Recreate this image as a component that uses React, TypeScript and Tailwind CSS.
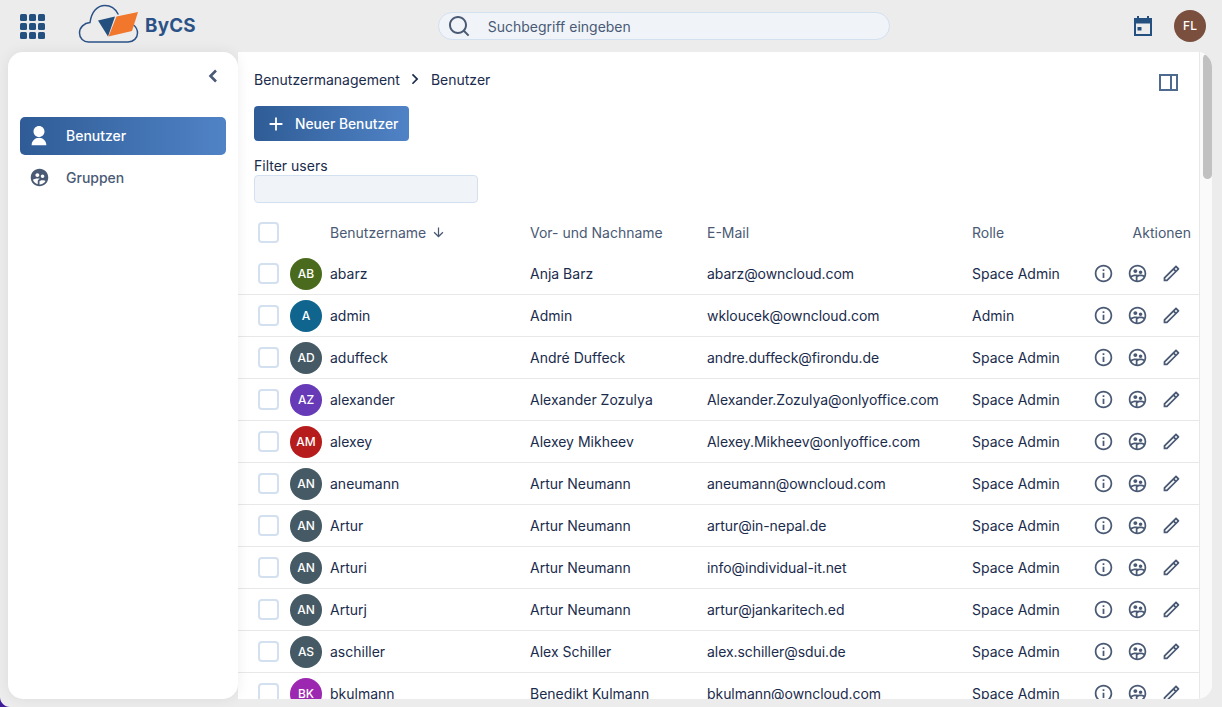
import {
  RiAddLine,
  RiArrowDownLine,
  RiArrowRightSLine,
  RiGroup2Fill,
  RiGroup2Line,
  RiInformationLine,
  RiPencilLine,
  RiSearchLine,
  RiUserFill,
} from "react-icons/ri";

type Row = {
  initials: string;
  color: string;
  user: string;
  name: string;
  mail: string;
  role: string;
};

const rows: Row[] = [
  { initials: "AB", color: "bg-[#4a6b1e]", user: "abarz", name: "Anja Barz", mail: "abarz@owncloud.com", role: "Space Admin" },
  { initials: "A", color: "bg-[#10658f]", user: "admin", name: "Admin", mail: "wkloucek@owncloud.com", role: "Admin" },
  { initials: "AD", color: "bg-[#455a64]", user: "aduffeck", name: "André Duffeck", mail: "andre.duffeck@firondu.de", role: "Space Admin" },
  { initials: "AZ", color: "bg-[#673ab7]", user: "alexander", name: "Alexander Zozulya", mail: "Alexander.Zozulya@onlyoffice.com", role: "Space Admin" },
  { initials: "AM", color: "bg-[#b71c1c]", user: "alexey", name: "Alexey Mikheev", mail: "Alexey.Mikheev@onlyoffice.com", role: "Space Admin" },
  { initials: "AN", color: "bg-[#455a64]", user: "aneumann", name: "Artur Neumann", mail: "aneumann@owncloud.com", role: "Space Admin" },
  { initials: "AN", color: "bg-[#455a64]", user: "Artur", name: "Artur Neumann", mail: "artur@in-nepal.de", role: "Space Admin" },
  { initials: "AN", color: "bg-[#455a64]", user: "Arturi", name: "Artur Neumann", mail: "info@individual-it.net", role: "Space Admin" },
  { initials: "AN", color: "bg-[#455a64]", user: "Arturj", name: "Artur Neumann", mail: "artur@jankaritech.ed", role: "Space Admin" },
  { initials: "AS", color: "bg-[#455a64]", user: "aschiller", name: "Alex Schiller", mail: "alex.schiller@sdui.de", role: "Space Admin" },
  { initials: "BK", color: "bg-[#9c27b0]", user: "bkulmann", name: "Benedikt Kulmann", mail: "bkulmann@owncloud.com", role: "Space Admin" },
];

// viewBox uses page coordinates so the points can be read straight off the screenshot
const Logo = () => (
  <svg viewBox="78 4 62 44" className="h-[44px] w-[62px]">
    <path
      d="M118 14C115 8 110 5.500 105 5.500 97 5.500 91.500 12 90 22.500 84 23 79.500 27.500 79.500 33 79.500 38.500 83.500 42 88.500 42H128C133.500 42 137.500 38 137.500 33 137.500 29.500 136 27 133.500 25"
      fill="none"
      stroke="#2b5287"
      strokeWidth="1.500"
      strokeLinecap="round"
    />
    <path d="M98 20.500L115 16.500 108 36.500z" fill="#24507f" />
    <path d="M116.500 16.500L138 12 132 31 108.500 36.500z" fill="#f0772b" />
  </svg>
);

const GridIcon = () => (
  <div className="grid grid-cols-3 gap-[2px]">
    {Array.from({ length: 9 }).map((_, i) => (
      <div key={i} className="h-[7px] w-[7px] rounded-[1.500px] bg-[#24507f]" />
    ))}
  </div>
);

const CalendarIcon = () => (
  <svg viewBox="0 0 20 20" className="h-[20px] w-[20px]" fill="#24507f">
    <path d="M4 0h2v2h8V0h2v2h3v18H1V2h3zM3 7.500v10.500h14V7.500z" />
    <rect x="4.500" y="11" width="4" height="3.500" />
  </svg>
);

const SidebarIcon = () => (
  <svg viewBox="0 0 19 17" className="mt-[6px] h-[17px] w-[19px]" fill="none" stroke="#4e6a8f" strokeWidth="2">
    <rect x="1" y="1" width="17" height="15" />
    <path d="M12 1v15" />
  </svg>
);

const Checkbox = () => (
  <div className="h-[21px] w-[21px] shrink-0 rounded-[4px] border-2 border-[#d3e0f0] bg-white" />
);

const Actions = () => (
  <div className="flex items-center gap-[13px] text-[#4a5a75]">
    <RiInformationLine className="h-[21px] w-[21px]" />
    <RiGroup2Line className="h-[21px] w-[21px]" />
    <RiPencilLine className="h-[21px] w-[21px]" />
  </div>
);

const App = () => {
  return (
    <div className="relative flex h-[707px] w-[1222px] flex-col overflow-hidden bg-[#ececec] font-['Inter',sans-serif] text-[14px] text-[#1a2b4c]">
      <header className="flex h-[52px] shrink-0 items-center pl-[20px] pr-[16px]">
        <GridIcon />
        <div className="ml-[33px] flex items-center">
          <Logo />
          <span className="ml-[5px] text-[18.800px] font-bold tracking-[0.2px] text-[#2b5287]">ByCS</span>
        </div>
        <div className="ml-[242px] flex h-[28px] w-[452px] items-center rounded-full border border-[#d3e0f0] bg-[#f0f4f9] pl-[8px] text-[#4a5a75]">
          <RiSearchLine className="h-[24px] w-[24px]" />
          <span className="ml-[17px]">Suchbegriff eingeben</span>
        </div>
        <div className="ml-auto flex items-center gap-[21px]">
          <CalendarIcon />
          <div className="flex h-[32px] w-[32px] items-center justify-center rounded-full bg-[#7a4f3e] text-[12px] font-medium text-white">
            FL
          </div>
        </div>
      </header>

      <div className="flex h-[647px] shrink-0">
        <aside className="relative z-10 ml-[8px] flex w-[230px] shrink-0 flex-col rounded-[15px] bg-white px-[12px] shadow-[0_0_14px_rgba(0,0,0,0.07)]">
          <div className="flex h-[64px] justify-end pr-[8px] pt-[17px] text-[#4a5a75]">
            <svg viewBox="0 0 10 14" className="h-[14px] w-[10px]" fill="none" stroke="currentColor" strokeWidth="2.600">
              <path d="M8 1.500L2.500 7 8 12.500" />
            </svg>
          </div>
          <div className="mt-[1px] flex h-[38px] items-center rounded-[5px] bg-gradient-to-r from-[#2f5c96] to-[#5083c6] pb-[1px] pl-[8px] font-medium text-white">
            <RiUserFill className="h-[22px] w-[22px]" />
            <span className="ml-[16px]">Benutzer</span>
          </div>
          <div className="mt-[4px] flex h-[38px] items-center pb-[1px] pl-[9px] font-medium text-[#4a5a75]">
            <RiGroup2Fill className="h-[21px] w-[21px]" />
            <span className="ml-[16px]">Gruppen</span>
          </div>
        </aside>

        <main className="mr-[10px] flex min-w-0 flex-1 flex-col overflow-hidden rounded-r-[15px] bg-white">
          <div className="flex min-h-0 flex-1">
            <div className="min-w-0 flex-1 pt-[17px]">
              <div className="flex h-[20px] items-center justify-between pl-[16px] pr-[21px]">
                <div className="flex items-center">
                  <span>Benutzermanagement</span>
                  <RiArrowRightSLine className="ml-[5px] h-[20px] w-[20px] text-[#1a2b4c]" />
                  <span className="ml-[6px]">Benutzer</span>
                </div>
                <SidebarIcon />
              </div>

              <div className="pl-[16px]">
                <button className="mt-[17px] flex h-[35px] w-[155px] items-center rounded-[4px] bg-gradient-to-r from-[#2f5c96] to-[#5083c6] pl-[11px] pt-[1px] text-[13.800px] font-medium text-white">
                  <RiAddLine className="h-[22px] w-[22px]" />
                  <span className="ml-[8px]">Neuer Benutzer</span>
                </button>
                <div className="mt-[16px] leading-[17px]">Filter users</div>
                <div className="mt-[1px] h-[28px] w-[224px] rounded-[4px] border border-[#d3e0f0] bg-[#f0f4f9]" />
              </div>

              <div className="mt-[8px] flex h-[42px] items-center text-[#4a5a75]">
                <div className="flex w-[92px] shrink-0 pl-[20px]">
                  <Checkbox />
                </div>
                <div className="flex w-[200px] shrink-0 items-center">
                  Benutzername
                  <RiArrowDownLine className="ml-[5px] h-[15px] w-[15px]" />
                </div>
                <div className="w-[177px] shrink-0">Vor- und Nachname</div>
                <div className="w-[265px] shrink-0">E-Mail</div>
                <div className="flex-1">Rolle</div>
                <div className="pr-[8px]">Aktionen</div>
              </div>

              {rows.map((r, i) => (
                <div key={i} className="flex h-[42px] items-center border-b border-[#e8e8e8]">
                  <div className="flex w-[92px] shrink-0 items-center pl-[20px]">
                    <Checkbox />
                    <div className={`ml-[11px] flex h-[32px] w-[32px] shrink-0 items-center justify-center rounded-full text-[12px] font-medium text-white ${r.color}`}>
                      {r.initials}
                    </div>
                  </div>
                  <div className="w-[200px] shrink-0">{r.user}</div>
                  <div className="w-[177px] shrink-0">{r.name}</div>
                  <div className="w-[265px] shrink-0 tracking-[-0.06px]">{r.mail}</div>
                  <div className="flex-1">{r.role}</div>
                  <div className="pr-[17px]">
                    <Actions />
                  </div>
                </div>
              ))}
            </div>

            <div className="w-[13px] shrink-0 border-l border-[#e8e8e8] bg-[#fafafa] pl-[3px] pt-[2px]">
              <div className="h-[125px] w-[9px] rounded-full bg-[#c1c1c1]" />
            </div>
          </div>
        </main>
      </div>

      {/* wallpaper showing through the window's rounded corner */}
      <svg viewBox="0 0 10 10" className="absolute bottom-0 left-0 h-[10px] w-[10px]">
        <path d="M0 0C0 5.500 4.500 10 10 10H0z" fill="#3f1a9a" />
      </svg>
    </div>
  );
};

export default App;
